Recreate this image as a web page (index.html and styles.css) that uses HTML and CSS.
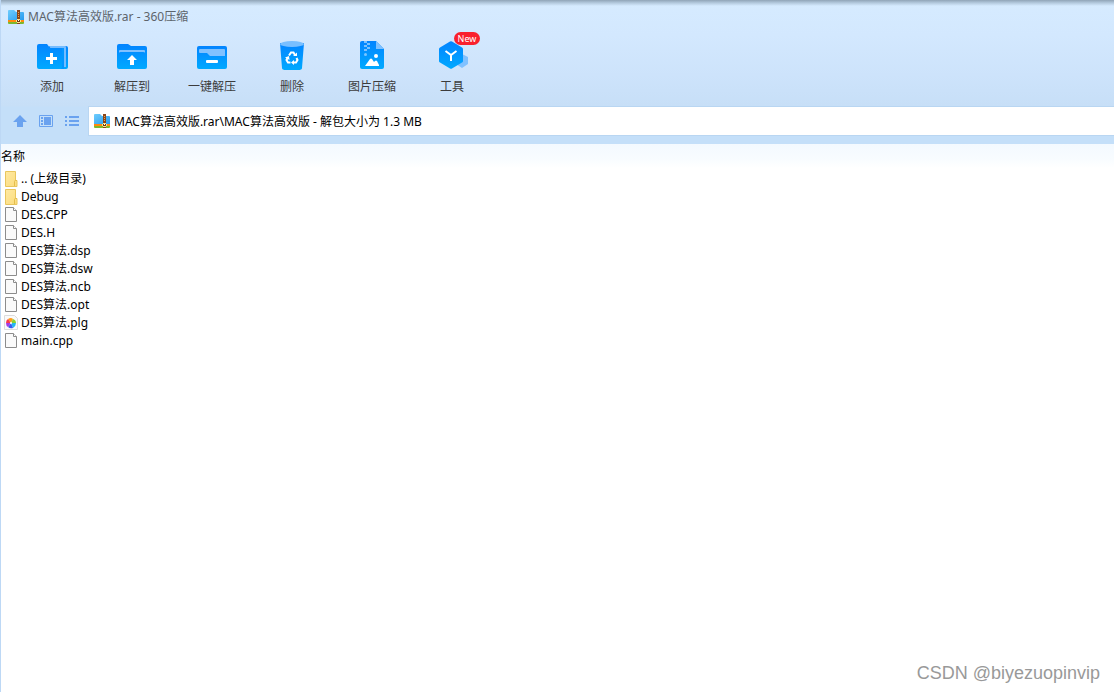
FILE: index.html
```html
<!DOCTYPE html>
<html lang="zh-CN">
<head>
<meta charset="utf-8">
<title>MAC算法高效版.rar - 360压缩</title>
<link rel="stylesheet" href="styles.css">
</head>
<body>
<svg class="defs" aria-hidden="true">
  <defs>
    <linearGradient id="blue" x1="0" y1="0" x2="0" y2="1"><stop offset="0" stop-color="#0384ff"/><stop offset="1" stop-color="#00a9ff"/></linearGradient>
    <linearGradient id="sky" x1="0" y1="0" x2="1" y2="1"><stop offset="0" stop-color="#6fcdfd"/><stop offset="1" stop-color="#2398ee"/></linearGradient>
    <linearGradient id="gold" x1="0" y1="0" x2="1" y2="1"><stop offset="0" stop-color="#ffe9a2"/><stop offset="1" stop-color="#fbdc7c"/></linearGradient>
    <symbol id="archive" viewBox="0 0 16 14">
      <path d="M0 1q0-1 1-1h5l2 2h7q1 0 1 1v8H0z" fill="url(#sky)"/>
      <path d="M0 10h16v2H0z" fill="#ff8a0c"/><path d="M0 12h16v1q0 1-1 1H1q-1 0-1-1z" fill="#7cb82f"/>
      <path d="M9 0h3v14H9z" fill="#8a4518"/><path d="M10 2h1v1h-1zM10 4h1v1h-1zM10 6h1v1h-1z" fill="#e6a050"/>
      <path d="M9 9h3v1h1v2h-1v1H9v-1H8v-2h1z" fill="#ffe28a"/><path d="M9 10h3v2H9z" fill="#6b3c12"/><path d="M10 10h1v1h-1z" fill="#fff"/>
    </symbol>
    <symbol id="folder" viewBox="0 0 14 16">
      <path d="M1.500.5h10v9h1.500v6H1.500z" fill="url(#gold)" stroke="#e9c65d"/><path d="M10.500 15V10.500q0-1 1-1h1.500" fill="none" stroke="#e5bd4c"/>
    </symbol>
    <symbol id="file" viewBox="0 0 14 16">
      <path d="M1.500.5h8l3 3v11h-11z" fill="#fafafa" stroke="#8c8c8c"/><path d="M9.500.5v3h3" fill="#fff" stroke="#8c8c8c"/>
    </symbol>
  </defs>
</svg>
<header class="chrome">
  <div class="titlebar">
    <svg class="app-icon" aria-hidden="true"><use href="#archive"/></svg>
    <h1 class="title">MAC算法高效版.rar - 360压缩</h1>
  </div>
  <nav class="toolbar" aria-label="工具栏">
    <button class="tool" type="button">
      <svg class="tool-icon" viewBox="0 0 40 36" aria-hidden="true">
        <path d="M17 8h17q2 0 2 2v19q0 2-2 2H17z" fill="url(#blue)"/><path d="M17 8h16q1 0 1 1v20h-2V11H19z" fill="#75bcff"/>
        <path d="M5 8q0-2 2-2h8l3 4h13v19q0 2-2 2H7q-2 0-2-2z" fill="url(#blue)"/>
        <path d="M30 10h2v21h-3q1-1 1-2z" fill="#0396ff"/><path d="M18 15h3v4h4v3h-4v4h-3v-4h-4v-3h4z" fill="#fff"/>
      </svg>
      <span>添加</span>
    </button>
    <button class="tool" type="button">
      <svg class="tool-icon" viewBox="0 0 40 36" aria-hidden="true">
        <path d="M5 8q0-2 2-2h9l3 2h14q2 0 2 2v19q0 2-2 2H7q-2 0-2-2z" fill="url(#blue)"/>
        <path d="M7 15v-2q0-1 1-1h24q1 0 1 1v2q0-1-2-1H9q-2 0-2 1z" fill="#80c1ff"/><path d="M20 17l5 5h-3v5h-4v-5h-3z" fill="#fff"/>
      </svg>
      <span>解压到</span>
    </button>
    <button class="tool" type="button">
      <svg class="tool-icon" viewBox="0 0 40 36" aria-hidden="true">
        <rect x="5" y="8" width="30" height="23" rx="2" fill="url(#blue)"/>
        <path d="M7 14v-2q0-1 1-1h24q1 0 1 1v6H18l-3-3H8q-1 0-1-1z" fill="#80c1ff"/><rect x="14" y="22" width="12" height="3" rx="1" fill="#fff"/>
      </svg>
      <span>一键解压</span>
    </button>
    <button class="tool" type="button">
      <svg class="tool-icon" viewBox="0 0 40 36" aria-hidden="true">
        <path d="M8 5l2 25q0 2 4 2h12q4 0 4-2l2-25z" fill="url(#blue)"/><ellipse cx="20" cy="6" rx="12" ry="3" fill="#79bfff"/>
        <g fill="none" stroke="#fff" stroke-width="2"><path d="M17 17.500l2-3h2.500l1.500 2.500"/><path d="M24.500 20l1 2-1.500 2.500h-3"/><path d="M18.500 24.500H16l-1.500-2.500 1-2"/></g>
        <path d="M21 18h4v-3.500zM22 22v5l-3-2.500zM13 19.500l4-1.500.5 4z" fill="#fff"/>
      </svg>
      <span>删除</span>
    </button>
    <button class="tool" type="button">
      <svg class="tool-icon" viewBox="0 0 40 36" aria-hidden="true">
        <path d="M8 5q0-2 2-2h14l8 8v18q0 2-2 2H10q-2 0-2-2z" fill="url(#blue)"/><path d="M24 3l8 8h-8z" fill="#80c1ff"/>
        <path d="M12 3h3v2h3v2h-3v2h3v2h-3v2h-3v-2h3V9h-3V7h3V5h-3z" fill="#7bc0ff"/><circle cx="13.500" cy="16.500" r="1.500" fill="#7bc5ff"/>
        <path d="M13 28l5-7q1-1 2 0l2 3 1-1q1-1 2 0l2 4v1z" fill="#fff"/><circle cx="24" cy="18" r="2" fill="#fff"/>
      </svg>
      <span>图片压缩</span>
    </button>
    <button class="tool" type="button">
      <svg class="tool-icon" viewBox="0 0 40 36" aria-hidden="true">
        <path d="M30 16l6 3v7l-6 4-6-4v-7z" fill="#80c1ff"/>
        <path d="M18 3.500q1-.6 2 0l10 6q1 .5 1 1.500v12q0 1-1 1.500l-10 6q-1 .6-2 0l-10-6q-1-.5-1-1.500V11q0-1 1-1.500z" fill="url(#blue)"/>
        <path d="M13.500 13l5.500 4 5.500-4M19 17v6" fill="none" stroke="#fff" stroke-width="2"/>
      </svg>
      <span>工具</span>
      <span class="badge">New</span>
    </button>
  </nav>
  <div class="addressbar">
    <div class="nav">
      <button class="nav-button" type="button" aria-label="向上">
        <svg class="nav-icon" viewBox="0 0 16 14" aria-hidden="true"><path d="M8 1l7 7h-4v5H5V8H1z" fill="#6aa2ef"/></svg>
      </button>
      <button class="nav-button" type="button" aria-label="预览">
        <svg class="nav-icon" viewBox="0 0 16 14" aria-hidden="true"><path d="M1.500 1.500h13v11h-13z" fill="none" stroke="#6aa2ef"/><path d="M3 3h2v2H3zM3 6h2v2H3zM3 9h2v2H3zM6 3h7v8H6z" fill="#6aa2ef"/></svg>
      </button>
      <button class="nav-button" type="button" aria-label="列表">
        <svg class="nav-icon" viewBox="0 0 16 14" aria-hidden="true"><path d="M1 2h2v2H1zM1 6h2v2H1zM1 10h2v2H1zM5 2h10v2H5zM5 6h10v2H5zM5 10h10v2H5z" fill="#6aa2ef"/></svg>
      </button>
    </div>
    <div class="address">
      <svg class="app-icon" aria-hidden="true"><use href="#archive"/></svg>
      <input class="path" type="text" aria-label="路径" value="MAC算法高效版.rar\MAC算法高效版 - 解包大小为 1.3 MB">
    </div>
  </div>
</header>
<main class="content">
  <table class="files">
    <thead><tr><th scope="col">名称</th></tr></thead>
    <tbody>
      <tr><td><div class="entry"><svg class="file-icon" aria-hidden="true"><use href="#folder"/></svg>.. (上级目录)</div></td></tr>
      <tr><td><div class="entry"><svg class="file-icon" aria-hidden="true"><use href="#folder"/></svg>Debug</div></td></tr>
      <tr><td><div class="entry"><svg class="file-icon" aria-hidden="true"><use href="#file"/></svg>DES.CPP</div></td></tr>
      <tr><td><div class="entry"><svg class="file-icon" aria-hidden="true"><use href="#file"/></svg>DES.H</div></td></tr>
      <tr><td><div class="entry"><svg class="file-icon" aria-hidden="true"><use href="#file"/></svg>DES算法.dsp</div></td></tr>
      <tr><td><div class="entry"><svg class="file-icon" aria-hidden="true"><use href="#file"/></svg>DES算法.dsw</div></td></tr>
      <tr><td><div class="entry"><svg class="file-icon" aria-hidden="true"><use href="#file"/></svg>DES算法.ncb</div></td></tr>
      <tr><td><div class="entry"><svg class="file-icon" aria-hidden="true"><use href="#file"/></svg>DES算法.opt</div></td></tr>
      <tr><td><div class="entry"><svg class="file-icon" viewBox="0 0 14 16" aria-hidden="true">
        <path d="M.5.5h10l3 3v11H.5z" fill="#fafafa" stroke="#dcdcdc"/>
        <path d="M7 8L4 4q3-2 5 0z" fill="#ff9d1c"/><path d="M7 8l2-4q3 1 3 4z" fill="#8bd12e"/><path d="M7 8h5q0 3-3 5z" fill="#22b8ef"/><path d="M7 8l2 5q-3 1-5-1z" fill="#365cf0"/><path d="M7 8l-3 4q-2-1-2-4z" fill="#a43be6"/><path d="M7 8H2q0-3 2-4z" fill="#fb3c4c"/><circle cx="7" cy="8" r="1" fill="#fff"/>
      </svg>DES算法.plg</div></td></tr>
      <tr><td><div class="entry"><svg class="file-icon" aria-hidden="true"><use href="#file"/></svg>main.cpp</div></td></tr>
    </tbody>
  </table>
  <p class="credit">CSDN @biyezuopinvip</p>
</main>
</body>
</html>
```
FILE: styles.css
```css
* { box-sizing: border-box; }
body {
  margin: 0;
  min-height: 100vh;
  display: flex;
  flex-direction: column;
  background: #fff;
  color: #000;
  font: 12px/18px "Noto Sans", "Noto Sans CJK SC", sans-serif;
}
button, input { font: inherit; color: inherit; border: 0; padding: 0; background: none; }
svg { display: block; flex: none; }
.defs { position: absolute; width: 0; height: 0; }
.chrome {
  background:
    linear-gradient(#90a4b7, #b5cbdf 3px, rgba(213, 234, 254, 0) 6px),
    linear-gradient(#d6ebff, #d3e8fe 35px, #cde3fb 75px, #c7dff7 106px, #c4dff9 107px);
  border-left: 1px solid #bdd8f5;
  padding-bottom: 8px;
}
.titlebar { display: flex; align-items: center; gap: 4px; padding: 8px 7px 0; }
.app-icon { width: 16px; height: 14px; }
.title { margin: 0; font-size: 12px; font-weight: 400; color: #5d646b; }
.toolbar { display: flex; padding: 12px 11px 0; }
.tool {
  position: relative;
  width: 80px;
  display: flex;
  flex-direction: column;
  align-items: center;
  gap: 4px;
  color: #3c3c3c;
}
.tool-icon { width: 40px; height: 36px; }
.badge {
  position: absolute;
  top: -6px;
  right: 12px;
  width: 26px;
  border-radius: 7px;
  background: #f9202d;
  color: #fff;
  font-size: 9px;
  line-height: 13px;
  text-align: center;
}
.addressbar { display: flex; padding-top: 10px; }
.nav { display: flex; align-items: center; gap: 10px; padding: 0 8px 0 11px; }
.nav-icon { width: 16px; height: 14px; }
.address {
  flex: 1;
  display: flex;
  align-items: center;
  gap: 4px;
  height: 30px;
  padding-left: 5px;
  background: #fff;
  border: 1px solid #b9d6f2;
  border-right: 0;
}
.path { flex: 1; min-width: 0; height: 20px; }
.content {
  flex: 1;
  display: flex;
  flex-direction: column;
  justify-content: space-between;
  border-left: 1px solid #bdd8f5;
}
.files { width: 100%; border-collapse: collapse; }
.files th {
  height: 26px;
  padding: 3px 0 4px;
  font-weight: 400;
  text-align: left;
  background: linear-gradient(#f3f9ff, #f8fcff 15px, #fff 24px);
}
.files td { padding: 0; }
.entry { display: flex; align-items: center; gap: 3px; height: 18px; padding-left: 3px; }
.file-icon { width: 14px; height: 16px; }
.credit {
  margin: 0;
  padding: 0 14px 8px;
  color: #999;
  font: 18px/22px "Liberation Sans", Arial, sans-serif;
  text-align: right;
}
```
